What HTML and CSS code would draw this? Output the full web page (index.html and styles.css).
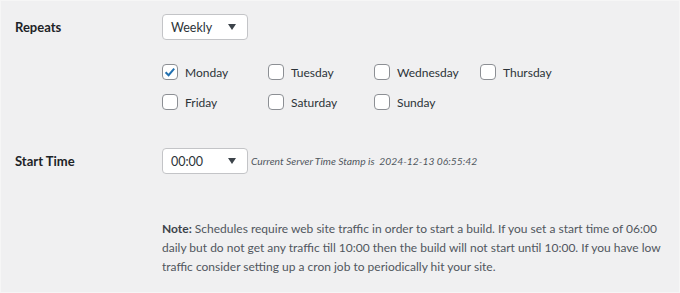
FILE: index.html
```html
<!DOCTYPE html>
<html lang="en-us">
<head>
    <meta charset="UTF-8">
    <meta name="viewport" content="width=device-width, initial-scale=1.0">
    <title>Schedule</title>
    <link rel="stylesheet" href="styles.css">
</head>
<body>
    <main class="schedule">
        <div class="form-row repeats-row">
            <div class="row-label">Repeats</div>
            <div class="row-field">
                <div class="select-box">
                    <span>Weekly</span>
                    <svg class="caret" viewBox="0 0 8 6" width="8" height="6"><path d="M0 0 H8 L4 6 Z" fill="#3c434a"/></svg>
                </div>
                <div class="days">
                    <label class="day"><span class="check checked"><svg viewBox="0 0 16 16" width="16" height="16"><path d="M3.6 8.2 L6.6 11.2 L12.2 4.6" fill="none" stroke="#2271b1" stroke-width="2"/></svg></span>Monday</label>
                    <label class="day"><span class="check"></span>Tuesday</label>
                    <label class="day"><span class="check"></span>Wednesday</label>
                    <label class="day"><span class="check"></span>Thursday</label>
                    <label class="day"><span class="check"></span>Friday</label>
                    <label class="day"><span class="check"></span>Saturday</label>
                    <label class="day"><span class="check"></span>Sunday</label>
                </div>
            </div>
        </div>
        <div class="form-row time-row">
            <div class="row-label">Start Time</div>
            <div class="row-field inline">
                <div class="select-box">
                    <span>00:00</span>
                    <svg class="caret" viewBox="0 0 8 6" width="8" height="6"><path d="M0 0 H8 L4 6 Z" fill="#3c434a"/></svg>
                </div>
                <span class="stamp">Current Server Time Stamp is&nbsp; 2024-12-13 06:55:42</span>
            </div>
        </div>
        <div class="form-row note-row">
            <div class="row-label"></div>
            <p class="note"><b>Note:</b> Schedules require web site traffic in order to start a build. If you set a start time of 06:00 daily but do not get any traffic till 10:00 then the build will not start until 10:00. If you have low traffic consider setting up a cron job to periodically hit your site.</p>
        </div>
    </main>
</body>
</html>
```

FILE: styles.css
```css
html, body {
    margin: 0;
    padding: 0;
}

body {
    background: #f0f0f1;
    font-family: Lato, "Noto Sans", sans-serif;
    font-size: 12px;
    color: #1d2327;
}

.schedule {
    height: 293px;
    box-sizing: border-box;
    border: 1px solid #f6f6f6;
    padding: 13px 14px 0 14px;
}

.form-row {
    display: grid;
    grid-template-columns: 147px 1fr;
}

.row-label {
    font-size: 13px;
    font-weight: 700;
    line-height: 26px;
}

.select-box {
    width: 86px;
    height: 26px;
    box-sizing: border-box;
    border: 1px solid #c3c4c7;
    border-radius: 4px;
    background: #fff;
    display: flex;
    align-items: center;
    justify-content: space-between;
    padding: 0 11px 0 8px;
    font-size: 12.5px;
    color: #2c3338;
}

.days {
    display: grid;
    grid-template-columns: repeat(4, 106px);
    row-gap: 14px;
    margin-top: 24px;
}

.day {
    display: flex;
    align-items: center;
    height: 16px;
    color: #2c3338;
}

.check {
    width: 16px;
    height: 16px;
    box-sizing: border-box;
    border: 1px solid #8c8f94;
    border-radius: 4px;
    background: #fff;
    margin-right: 7px;
    position: relative;
}

.check svg {
    position: absolute;
    left: -1px;
    top: -1px;
}

.time-row {
    margin-top: 38px;
}

.inline {
    display: flex;
    align-items: center;
    gap: 3px;
}

.stamp {
    font-style: italic;
    font-size: 10.3px;
    color: #50575e;
}

.note-row {
    margin-top: 45px;
}

.note {
    margin: 0;
    line-height: 19px;
    color: #50575e;
    max-width: 503px;
}

.note b {
    color: #3c434a;
}
```
